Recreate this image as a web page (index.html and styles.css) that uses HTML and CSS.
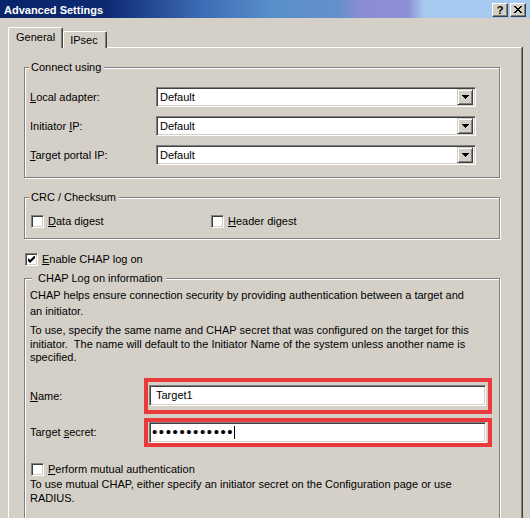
FILE: index.html
```html
<!DOCTYPE html>
<html lang="en">
<head>
    <meta charset="UTF-8">
    <title>Advanced Settings</title>
    <link rel="stylesheet" href="styles.css">
</head>
<body>
    <div class="window">
        <!-- Title bar -->
        <div class="titlebar">
            <span class="title">Advanced Settings</span>
            <div class="caption-btns">
                <span class="cap-btn help">?</span>
                <span class="cap-btn close">
                    <svg width="8" height="7" viewBox="0 0 8 7" shape-rendering="crispEdges"><path d="M0 0h2v1H0zM6 0h2v1H6zM1 1h2v1H1zM5 1h2v1H5zM2 2h4v1H2zM3 3h2v1H3zM2 4h4v1H2zM1 5h2v1H1zM5 5h2v1H5zM0 6h2v1H0zM6 6h2v1H6z" fill="#000"/></svg>
                </span>
            </div>
        </div>

        <!-- Tabs -->
        <div class="tabs">
            <div class="tab active">General</div>
            <div class="tab">IPsec</div>
        </div>

        <div class="panel">
            <fieldset class="group connect">
                <legend>Connect using</legend>
                <div class="field-row">
                    <span class="field-label"><u>L</u>ocal adapter:</span>
                    <div class="combo sunken"><span class="combo-text">Default</span><span class="combo-btn"><svg width="7" height="4" viewBox="0 0 7 4" shape-rendering="crispEdges"><path d="M0 0h7v1H0zM1 1h5v1H1zM2 2h3v1H2zM3 3h1v1H3z" fill="#000"/></svg></span></div>
                </div>
                <div class="field-row">
                    <span class="field-label">Initiator <u>I</u>P:</span>
                    <div class="combo sunken"><span class="combo-text">Default</span><span class="combo-btn"><svg width="7" height="4" viewBox="0 0 7 4" shape-rendering="crispEdges"><path d="M0 0h7v1H0zM1 1h5v1H1zM2 2h3v1H2zM3 3h1v1H3z" fill="#000"/></svg></span></div>
                </div>
                <div class="field-row">
                    <span class="field-label"><u>T</u>arget portal IP:</span>
                    <div class="combo sunken"><span class="combo-text">Default</span><span class="combo-btn"><svg width="7" height="4" viewBox="0 0 7 4" shape-rendering="crispEdges"><path d="M0 0h7v1H0zM1 1h5v1H1zM2 2h3v1H2zM3 3h1v1H3z" fill="#000"/></svg></span></div>
                </div>
            </fieldset>

            <fieldset class="group crc">
                <legend>CRC / Checksum</legend>
                <div class="check-row">
                    <label class="check data-digest"><span class="box sunken"></span><span><u>D</u>ata digest</span></label>
                    <label class="check"><span class="box sunken"></span><span><u>H</u>eader digest</span></label>
                </div>
            </fieldset>

            <label class="check enable-chap"><span class="box sunken"><svg width="7" height="7" viewBox="0 0 7 7"><path d="M0 2L2 4L7 -1V2L2 7L0 5Z" fill="#000"/></svg></span><span><u>E</u>nable CHAP log on</span></label>

            <fieldset class="group chap">
                <legend>CHAP Log on information</legend>
                <p class="intro">CHAP helps ensure connection security by providing authentication between a target and<br>an initiator.</p>
                <p class="info">To use, specify the same name and CHAP secret that was configured on the target for this<br>initiator.&nbsp; The name will default to the Initiator Name of the system unless another name is<br>specified.</p>

                <div class="secret-row">
                    <span class="secret-label"><u>N</u>ame:</span>
                    <div class="mark name-mark"><div class="textbox sunken">Target1</div></div>
                </div>
                <div class="secret-row">
                    <span class="secret-label">Target <u>s</u>ecret:</span>
                    <div class="mark secret-mark"><div class="textbox sunken"><span class="dots">&bull;&bull;&bull;&bull;&bull;&bull;&bull;&bull;&bull;&bull;&bull;&bull;</span><span class="caret"></span></div></div>
                </div>

                <label class="check mutual"><span class="box sunken"></span><span><u>P</u>erform mutual authentication</span></label>
                <p class="mutual-info">To use mutual CHAP, either specify an initiator secret on the Configuration page or use<br>RADIUS.</p>
            </fieldset>
        </div>
    </div>
</body>
</html>
```

FILE: styles.css
```css
body {
    margin: 0;
    font-family: "Liberation Sans", Arial, sans-serif;
    font-size: 11px;
    color: #000;
}

.window {
    width: 530px;
    height: 518px;
    background-color: #d4d0c8;
    overflow: hidden;
}

/* title bar */
.titlebar {
    height: 18px;
    display: flex;
    align-items: center;
    justify-content: space-between;
    padding: 0 4px 0 4px;
    background: linear-gradient(to right, #0a246a 0%, #0c2a72 20%, #3d6cb4 38%, #5a8fcc 52%, #6490cc 64%, #8c8cd4 68%, #8e90d6 77%, #a6caf0 80%, #a6caf0 100%);
}

.title {
    color: #fff;
    font-weight: bold;
    font-size: 11px;
    padding-top: 1px;
}

.caption-btns {
    display: flex;
    gap: 2px;
    margin-top: 1px;
}

.cap-btn {
    box-sizing: border-box;
    width: 16px;
    height: 14px;
    display: flex;
    align-items: center;
    justify-content: center;
    background-color: #d4d0c8;
    border: 1px solid;
    border-color: #fff #404040 #404040 #fff;
    box-shadow: inset -1px -1px 0 #808080;
}

.cap-btn.help {
    font-weight: bold;
    font-size: 11px;
    line-height: 12px;
}

/* tabs */
.tabs {
    display: flex;
    align-items: flex-end;
    padding: 9px 0 0 8px;
    margin-bottom: -1px;
    position: relative;
    z-index: 1;
}

.tab {
    box-sizing: border-box;
    height: 17px;
    padding: 1px 8px 0 6px;
    line-height: 14px;
    border: 1px solid;
    border-color: #fff #404040 transparent #fff;
    border-bottom: none;
    border-radius: 2px 2px 0 0;
    box-shadow: inset -1px 0 0 #808080;
    background-color: #d4d0c8;
}

.tab.active {
    height: 21px;
    padding: 2px 7px 0 7px;
}

.panel {
    box-sizing: border-box;
    margin-left: 8px;
    width: 514px;
    height: 520px;
    border-top: 1px solid #fff;
    border-left: 1px solid #fff;
    border-right: 1px solid #808080;
    box-shadow: 1px 0 0 #404040;
    padding-left: 15px;
}

/* group boxes */
.group {
    box-sizing: border-box;
    width: 476px;
    min-width: 0;
    margin: 0;
    padding: 0 5px;
    border: 1px solid #808080;
    box-shadow: inset 1px 1px 0 #fff, 1px 1px 0 #fff;
}

.group legend {
    line-height: 13px;
    padding: 0 3px 0 2px;
    margin-left: -1px;
    background-color: #d4d0c8;
}

.connect {
    margin-top: 13px;
    padding-top: 13px;
    padding-bottom: 12px;
    display: flex;
    flex-direction: column;
    gap: 9px;
}

.field-row {
    display: flex;
    align-items: center;
}

.field-label {
    width: 126px;
}

.sunken {
    border: 1px solid;
    border-color: #808080 #fff #fff #808080;
    box-shadow: inset 1px 1px 0 #404040, inset -1px -1px 0 #d4d0c8;
    background-color: #fff;
}

.combo {
    box-sizing: border-box;
    width: 320px;
    height: 20px;
    display: flex;
    align-items: center;
    padding: 2px;
}

.combo-text {
    flex: 1;
    padding-left: 1px;
}

.combo-btn {
    box-sizing: border-box;
    width: 16px;
    height: 16px;
    display: flex;
    align-items: center;
    justify-content: center;
    background-color: #d4d0c8;
    border: 1px solid;
    border-color: #d4d0c8 #404040 #404040 #d4d0c8;
    box-shadow: inset 1px 1px 0 #fff, inset -1px -1px 0 #808080;
}

/* checkboxes */
.check {
    display: flex;
    align-items: center;
    gap: 4px;
    line-height: 13px;
}

.box {
    box-sizing: border-box;
    width: 13px;
    height: 13px;
    margin-left: 1px;
    display: flex;
    align-items: center;
    justify-content: center;
}

.crc {
    margin-top: 13px;
    padding-top: 11px;
    padding-bottom: 10px;
}

.check-row {
    display: flex;
}

.data-digest {
    width: 180px;
}

.enable-chap {
    margin-top: 14px;
}

.chap {
    margin-top: 6px;
    height: 260px;
    border-bottom: none;
}

.chap legend {
    margin-left: 2px;
    padding-left: 6px;
}

.chap p {
    margin: 0;
    white-space: nowrap;
}

.intro {
    line-height: 16px;
    margin-top: 2px !important;
}

.info {
    line-height: 13.5px;
    margin-top: 5px !important;
}

.secret-row {
    display: flex;
    align-items: center;
}

.secret-row + .secret-row {
    margin-top: 4px;
}

.secret-row:first-of-type {
    margin-top: 13px;
}

.secret-label {
    width: 114px;
}

.mark {
    box-sizing: border-box;
    width: 348px;
    border: 4px solid #e8393b;
}

.name-mark {
    padding: 3px 2px 4px 1px;
}

.secret-mark {
    padding: 0 2px 0 1px;
}

.textbox {
    box-sizing: border-box;
    height: 21px;
    display: flex;
    align-items: center;
    padding-left: 6px;
}

.secret-mark .textbox {
    padding-left: 2px;
}

.dots {
    font-size: 15px;
    letter-spacing: 1.6px;
    line-height: 14px;
}

.caret {
    width: 1px;
    height: 13px;
    background-color: #000;
}

.mutual {
    margin-top: 16px;
}

.mutual-info {
    line-height: 14px;
    margin-top: 1px !important;
}
```
